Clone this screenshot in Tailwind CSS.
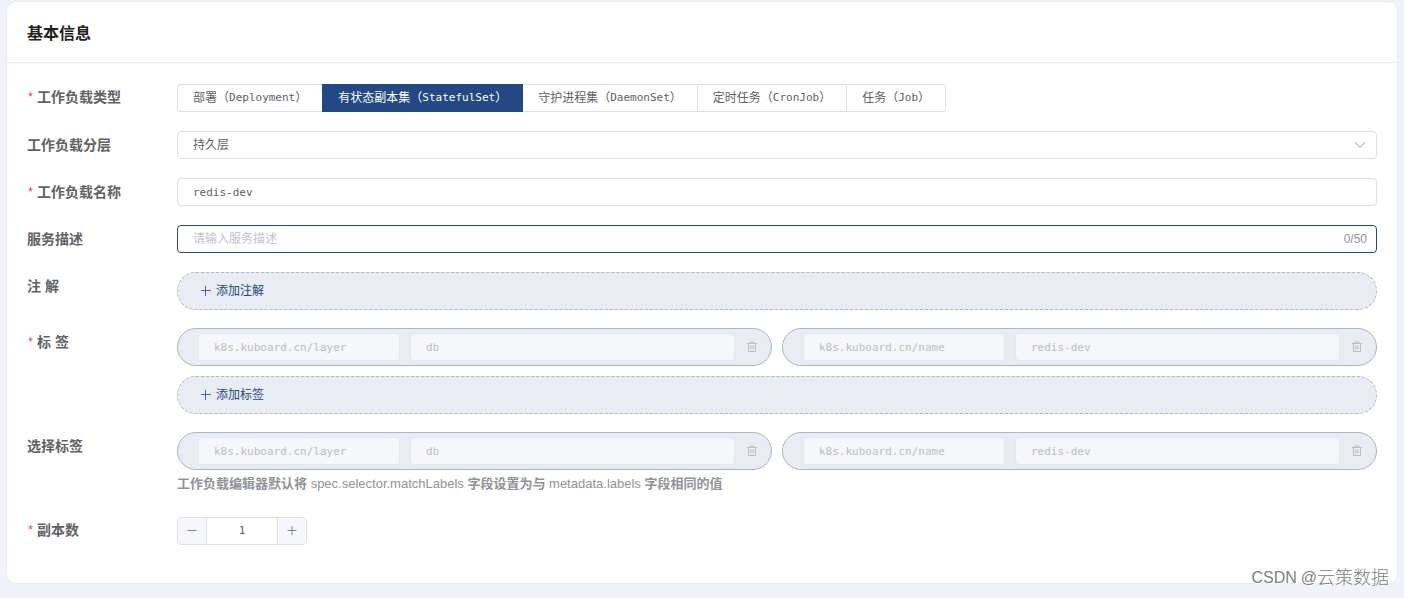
<!DOCTYPE html>
<html lang="zh-CN">
<head>
<meta charset="utf-8">
<title>基本信息</title>
<script src="https://cdn.jsdelivr.net/npm/@tailwindcss/browser@4"></script>
</head>
<body class="relative min-h-screen bg-[#f0f3fb] px-1.5 pt-px pb-3 font-['Liberation_Sans','Noto_Sans_CJK_SC',sans-serif] text-[#606266]">
<svg class="hidden">
  <symbol id="trash" viewBox="0 0 12 12"><path d="M1 2.500h10M4 2.500v-1.500h4v1.500M2.500 2.500v8h7v-8M5 4.500v4M7 4.500v4" fill="none" stroke="currentColor"/></symbol>
  <symbol id="plus" viewBox="0 0 12 12"><path d="M1 5.500h10M5.500 1v10" fill="none" stroke="currentColor" stroke-width=".8"/></symbol>
</svg>
<main class="rounded-[10px] border border-[#e8ecf6] bg-white pb-[38px]">
  <h1 class="flex h-[61px] items-center border-b border-[#e6eaf4] px-5 pt-[3px] text-base font-bold text-[#222]">基本信息</h1>
  <form class="flex flex-col gap-[19px] px-5 pt-[21px]">
    <fieldset class="flex">
      <legend class="contents"><span class="flex h-[26px] w-[150px] shrink-0 items-center gap-1 pl-px text-sm font-bold"><span class="text-[13px] font-normal text-[#f04a55]">*</span>工作负载类型</span></legend>
      <div class="flex h-7 text-xs whitespace-nowrap">
        <label class="flex items-center rounded-l border border-r-0 border-[#dcdfe6] px-[15px]"><input class="sr-only" type="radio" name="kind">部署（<span class="font-['DejaVu_Sans_Mono',monospace] text-[11px]">Deployment</span>）</label>
        <label class="flex items-center border border-[#234883] bg-[#234883] px-[15px] text-white"><input class="sr-only" type="radio" name="kind" checked>有状态副本集（<span class="font-['DejaVu_Sans_Mono',monospace] text-[11px]">StatefulSet</span>）</label>
        <label class="flex items-center border border-l-0 border-[#dcdfe6] px-[15px]"><input class="sr-only" type="radio" name="kind">守护进程集（<span class="font-['DejaVu_Sans_Mono',monospace] text-[11px]">DaemonSet</span>）</label>
        <label class="flex items-center border border-l-0 border-[#dcdfe6] px-[15px]"><input class="sr-only" type="radio" name="kind">定时任务（<span class="font-['DejaVu_Sans_Mono',monospace] text-[11px]">CronJob</span>）</label>
        <label class="flex items-center rounded-r border border-l-0 border-[#dcdfe6] px-[15px]"><input class="sr-only" type="radio" name="kind">任务（<span class="font-['DejaVu_Sans_Mono',monospace] text-[11px]">Job</span>）</label>
      </div>
    </fieldset>
    <div class="flex">
      <label for="layer" class="flex h-7 w-[150px] shrink-0 items-center text-sm font-bold">工作负载分层</label>
      <div class="relative flex-1">
        <select id="layer" class="block h-7 w-full appearance-none rounded border border-[#dcdfe6] bg-white px-[15px] text-xs"><option>持久层</option></select>
        <svg class="pointer-events-none absolute top-2 right-[11px] h-3 w-3 text-[#c0c4cc]" viewBox="0 0 12 12"><path d="M1 3.500l5 5 5-5" fill="none" stroke="currentColor" stroke-width="1.2"/></svg>
      </div>
    </div>
    <div class="flex">
      <label for="name" class="flex h-7 w-[150px] shrink-0 items-center gap-1 pl-px text-sm font-bold"><span class="text-[13px] font-normal text-[#f04a55]">*</span>工作负载名称</label>
      <input id="name" value="redis-dev" class="h-7 min-w-0 flex-1 rounded border border-[#dcdfe6] px-[15px] font-['DejaVu_Sans_Mono',monospace] text-[11px]">
    </div>
    <div class="flex">
      <label for="desc" class="flex h-7 w-[150px] shrink-0 items-center text-sm font-bold">服务描述</label>
      <div class="flex h-7 flex-1 items-center rounded border border-[#234883] pr-[9px] pl-[15px] text-xs">
        <input id="desc" maxlength="50" placeholder="请输入服务描述" class="min-w-0 flex-1 outline-none placeholder:text-[#c0c4cc]">
        <span class="text-[#909399]">0/50</span>
      </div>
    </div>
    <div class="flex flex-col gap-[18px]">
      <div class="flex">
        <div class="flex h-7 w-[150px] shrink-0 items-center text-sm font-bold">注 解</div>
        <button type="button" class="flex h-[38px] flex-1 items-center gap-1 rounded-full border border-dashed border-[#a7b6cd] bg-[#e9ecf3] px-[22px] text-xs text-[#234883]"><svg class="h-3 w-3"><use href="#plus"/></svg>添加注解</button>
      </div>
      <div class="flex">
        <div class="flex h-7 w-[150px] shrink-0 items-center gap-1 pl-px text-sm font-bold"><span class="text-[13px] font-normal text-[#f04a55]">*</span>标 签</div>
        <div class="flex flex-1 flex-col gap-2.5">
          <div class="grid grid-cols-2 gap-2.5 font-['DejaVu_Sans_Mono',monospace] text-[11px] text-[#babdc3]">
            <div class="flex h-[38px] items-center rounded-full border border-[#a7b6cd] bg-[#e9ecf3] pr-[13px] pl-5">
              <input disabled aria-label="标签名" value="k8s.kuboard.cn/layer" class="mr-2.5 h-7 w-[202px] rounded border border-[#e4e7ed] bg-[#f5f7fa] px-[15px]">
              <input disabled aria-label="标签值" value="db" class="mr-[11px] h-7 min-w-0 flex-1 rounded border border-[#e4e7ed] bg-[#f5f7fa] px-[15px]">
              <button type="button" disabled aria-label="删除"><svg class="h-3 w-3"><use href="#trash"/></svg></button>
            </div>
            <div class="flex h-[38px] items-center rounded-full border border-[#a7b6cd] bg-[#e9ecf3] pr-[13px] pl-5">
              <input disabled aria-label="标签名" value="k8s.kuboard.cn/name" class="mr-2.5 h-7 w-[202px] rounded border border-[#e4e7ed] bg-[#f5f7fa] px-[15px]">
              <input disabled aria-label="标签值" value="redis-dev" class="mr-[11px] h-7 min-w-0 flex-1 rounded border border-[#e4e7ed] bg-[#f5f7fa] px-[15px]">
              <button type="button" disabled aria-label="删除"><svg class="h-3 w-3"><use href="#trash"/></svg></button>
            </div>
          </div>
          <button type="button" class="flex h-[38px] items-center gap-1 rounded-full border border-dashed border-[#a7b6cd] bg-[#e9ecf3] px-[22px] text-xs text-[#234883]"><svg class="h-3 w-3"><use href="#plus"/></svg>添加标签</button>
        </div>
      </div>
      <div class="flex">
        <div class="flex h-7 w-[150px] shrink-0 items-center text-sm font-bold">选择标签</div>
        <div class="flex-1">
          <div class="grid grid-cols-2 gap-2.5 font-['DejaVu_Sans_Mono',monospace] text-[11px] text-[#babdc3]">
            <div class="flex h-[38px] items-center rounded-full border border-[#a7b6cd] bg-[#e9ecf3] pr-[13px] pl-5">
              <input disabled aria-label="选择标签名" value="k8s.kuboard.cn/layer" class="mr-2.5 h-7 w-[202px] rounded border border-[#e4e7ed] bg-[#f5f7fa] px-[15px]">
              <input disabled aria-label="选择标签值" value="db" class="mr-[11px] h-7 min-w-0 flex-1 rounded border border-[#e4e7ed] bg-[#f5f7fa] px-[15px]">
              <button type="button" disabled aria-label="删除"><svg class="h-3 w-3"><use href="#trash"/></svg></button>
            </div>
            <div class="flex h-[38px] items-center rounded-full border border-[#a7b6cd] bg-[#e9ecf3] pr-[13px] pl-5">
              <input disabled aria-label="选择标签名" value="k8s.kuboard.cn/name" class="mr-2.5 h-7 w-[202px] rounded border border-[#e4e7ed] bg-[#f5f7fa] px-[15px]">
              <input disabled aria-label="选择标签值" value="redis-dev" class="mr-[11px] h-7 min-w-0 flex-1 rounded border border-[#e4e7ed] bg-[#f5f7fa] px-[15px]">
              <button type="button" disabled aria-label="删除"><svg class="h-3 w-3"><use href="#trash"/></svg></button>
            </div>
          </div>
          <p class="h-7 text-[13px] leading-7 font-bold text-[#909399]">工作负载编辑器默认将 <span class="font-normal">spec.selector.matchLabels</span> 字段设置为与 <span class="font-normal">metadata.labels</span> 字段相同的值</p>
        </div>
      </div>
    </div>
    <div class="flex">
      <label for="replicas" class="flex h-[26px] w-[150px] shrink-0 items-center gap-1 pl-px text-sm font-bold"><span class="text-[13px] font-normal text-[#f04a55]">*</span>副本数</label>
      <div class="flex h-7 w-[130px] overflow-hidden rounded border border-[#dcdfe6]">
        <button type="button" aria-label="减少" class="flex w-[29px] items-center justify-center border-r border-[#dcdfe6] bg-[#f5f7fa] text-[#85878b]"><svg class="h-3 w-3" viewBox="0 0 12 12"><path d="M1.500 5.500h9" stroke="currentColor"/></svg></button>
        <input id="replicas" value="1" class="min-w-0 flex-1 text-center font-['DejaVu_Sans_Mono',monospace] text-[11px]">
        <button type="button" aria-label="增加" class="flex w-[29px] items-center justify-center border-l border-[#dcdfe6] bg-[#f5f7fa] text-[#85878b]"><svg class="h-3 w-3" viewBox="0 0 12 12"><path d="M1.500 5.500h9M6 1v9" stroke="currentColor"/></svg></button>
      </div>
    </div>
  </form>
</main>
<div class="absolute right-[15px] bottom-1.5 flex items-center gap-1 leading-6 text-[#808080] [text-shadow:1px_1px_0_#fff]"><span class="text-base">CSDN</span><span class="flex items-center text-lg font-light"><span class="text-base">@</span>云策数据</span></div>
</body>
</html>
